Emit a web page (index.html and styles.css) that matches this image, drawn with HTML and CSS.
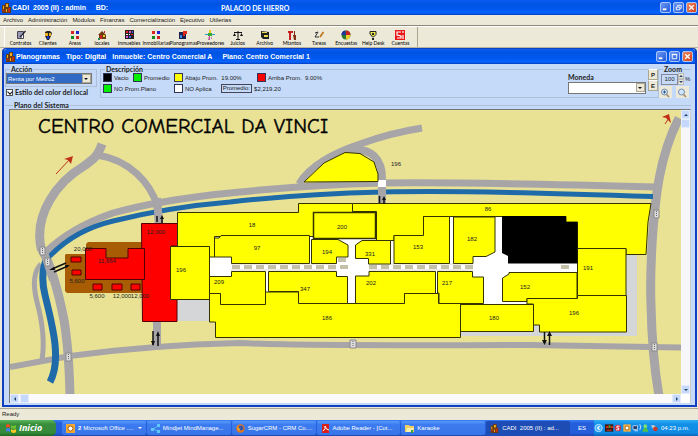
FILE: index.html
```html
<!DOCTYPE html>
<html lang="es">
<head>
<meta charset="utf-8">
<title>CADI 2005 - Planogramas</title>
<link rel="stylesheet" href="styles.css">
</head>
<body>
<svg class="defs" aria-hidden="true">
  <symbol id="app" viewBox="0 0 9 10"><path fill="#6b3a10" d="M0 2h3V0h4v4h2v6H0z"/><path fill="#f0b020" d="M1 3h1v3H1zM4 1h2v3H4zM4 6h1v3H4z"/><path fill="#c03010" d="M6 5h2v4H6zM0 7h3v1H0z"/></symbol>
  <symbol id="min" viewBox="0 0 10 10"><path fill="#fff" d="M2 6h4v2H2z"/></symbol>
  <symbol id="max" viewBox="0 0 10 10"><path fill="none" stroke="#fff" d="M2.500 2.500h5v5h-5zM2 3h6"/></symbol>
  <symbol id="restore" viewBox="0 0 10 10"><path fill="none" stroke="#fff" d="M4 4V2.500h4v3.500H7M2.500 4.500h4v3h-4z"/></symbol>
  <symbol id="close" viewBox="0 0 10 10"><path fill="none" stroke="#fff" stroke-width="1.400" d="M2.500 2.500l5 5M7.500 2.500l-5 5"/></symbol>
  <symbol id="lens" viewBox="0 0 12 11"><path stroke="#a08868" stroke-width="1.600" d="M7 7l3 3"/><circle cx="5.500" cy="5" r="3" fill="#cfe6ff" stroke="#7c8ca8"/></symbol>
</svg>

<header class="titlebar">
  <svg class="app-icon"><use href="#app"/></svg>
  <h1 class="title-left">CADI&nbsp; 2005 (II) : admin &nbsp; &nbsp; BD:</h1>
  <span class="title-mid">PALACIO DE HIERRO</span>
  <div class="winbtns">
    <button aria-label="Minimizar"><svg><use href="#min"/></svg></button>
    <button aria-label="Restaurar"><svg><use href="#restore"/></svg></button>
    <button class="x" aria-label="Cerrar"><svg><use href="#close"/></svg></button>
  </div>
</header>

<nav class="menu">
  <a href="#">Archivo</a><a href="#">Administración</a><a href="#">Módulos</a><a href="#">Finanzas</a><a href="#">Comercialización</a><a href="#">Ejecutivo</a><a href="#">Utilerias</a>
</nav>

<div class="toolbar">
  <div class="tools">
    <button><svg viewBox="0 0 10 10"><path fill="#fff" stroke="#445" d="M1.500 1.500h6v7h-6z"/><path stroke="#336" d="M2 3h5M2 5h3M2 7h4"/><path stroke="#223" stroke-width="1.200" d="M9.500 1L4 7"/></svg>Contratos</button>
    <button><svg viewBox="0 0 10 10"><path fill="#222" d="M2 2l2-1h3l2 2-1 3-2 4H4L2 6z"/><path fill="#e8b020" d="M2 3h3v3H2zM6 3h2v3H6z"/><path fill="#1830c0" d="M4 6h2v3H4z"/></svg>Clientes</button>
    <button><svg viewBox="0 0 10 10"><path fill="#d22" d="M1 1h3v3H1z"/><path fill="#22c" d="M6 1h3v3H6z"/><path fill="#182" d="M1 6h3v3H1z"/><path fill="#c22" d="M6 6h3v3H6z"/></svg>Areas</button>
    <button><svg viewBox="0 0 10 10"><path fill="#6a3c10" d="M1 5l4-4 4 4v4H2V5z"/><path fill="#d42020" d="M3 5h2v4H3zM7 1h1v2H7z"/><path fill="#e8d030" d="M6 5h2v2H6z"/><path fill="#284" d="M1 8h2v2H1z"/></svg>locales</button>
    <button><svg viewBox="0 0 10 10"><path fill="#222" d="M1 0h9v9H1z"/><path fill="#e22" d="M2 1h2v2H2zM7 4h2v1H7z"/><path fill="#d5c" d="M5 1h2v2H5zM2 6h2v2H2z"/><path fill="#45e" d="M8 1h1v2H8zM5 6h2v2H5z"/><path fill="#fff" d="M2 4h2v1H2zM5 4h1v1H5z"/></svg>Inmuebles</button>
    <button><svg viewBox="0 0 10 10"><path fill="#d22" d="M1 1h3v3H1z"/><path fill="#22c" d="M6 1h3v3H6z"/><path fill="#182" d="M1 6h3v3H1z"/><path fill="#c22" d="M6 6h3v3H6z"/></svg>Inmobiliarias</button>
    <button><svg viewBox="0 0 10 10"><path fill="#1a2050" d="M1 2h7v7H1z"/><path fill="#e02818" d="M5 1h4v3H7v2H5z"/><path fill="#3a8ae0" d="M2 5h2v3H2z"/></svg>Planogramas</button>
    <button><svg viewBox="0 0 10 10"><path fill="#e8c818" d="M4 0h2v3H4z"/><path fill="#28a0c8" d="M0 4h10v1H0z"/><path fill="#38a838" d="M3 3h4v3H3z"/><path fill="#c050a0" d="M4 6h1v4H3zM6 6l1 3H6z"/></svg>Proveedores</button>
    <button><svg viewBox="0 0 10 10"><path fill="none" stroke="#111" d="M5 1v8M1 2.500h8M3 9.500h4"/><path fill="#111" d="M0 6l1.500-3L3 6zM7 6l1.500-3L10 6z"/></svg>Juicios</button>
    <button><svg viewBox="0 0 10 10"><path fill="#222" d="M1 1l8 1v7H3L1 7z"/><path fill="#e8dc50" d="M2 2h5v1H2zM4 5h4v2H4z"/></svg>Archivo</button>
    <button><svg viewBox="0 0 10 10"><path fill="#c82020" d="M1 1h5v2H4v7H2V3H1z"/><path fill="#803018" d="M7 1h1v4H7zM6 5h3v5H7z"/></svg>Mtantos</button>
    <button><svg viewBox="0 0 10 10"><path fill="none" stroke="#333" d="M1 3l3-1-3 5h4"/><path stroke="#c07820" stroke-width="1.800" d="M9.500 2L6 7"/></svg>Tareas</button>
    <button><svg viewBox="0 0 10 10"><circle cx="5" cy="5" r="4.500" fill="#2a7830"/><path fill="#c82020" d="M5 5V.5A4.500 4.500 0 0 1 9.500 5z"/><path fill="#e8d030" d="M5 5h4.500A4.500 4.500 0 0 1 5 9.500z"/><path fill="#2030a0" d="M5 5H.5A4.500 4.500 0 0 1 4 .6z"/></svg>Encuestas</button>
    <button><svg viewBox="0 0 10 10"><path fill="#ece850" stroke="#222" d="M2 1.500h6v3L5.500 7h-1L2 4z"/><path fill="#222" d="M4 3h2v2H4zM4 8h2v2H4z"/></svg>Help Desk</button>
    <button><svg viewBox="0 0 10 10"><path fill="#e81818" d="M0 0h10v10H0z"/><path fill="none" stroke="#fff" stroke-width="1.200" d="M6 2H2v3l4 1v2H2M8 1v2M8 5v4"/></svg>Cuentas</button>
  </div>
</div>

<main class="mdi">
  <div class="titlebar inner">
    <svg class="app-icon"><use href="#app"/></svg>
    <h2 class="mdi-title"><span>Planogramas</span><span>Tipo: Digital</span><span>Inmueble: Centro Comercial A</span><span class="plano">Plano: Centro Comercial 1</span></h2>
    <div class="winbtns">
      <button aria-label="Minimizar plano"><svg><use href="#min"/></svg></button>
      <button aria-label="Maximizar plano"><svg><use href="#max"/></svg></button>
      <button class="x" aria-label="Cerrar plano"><svg><use href="#close"/></svg></button>
    </div>
  </div>

  <div class="client">
    <div class="controls">
      <div class="left">
        <fieldset class="group accion">
          <legend><label for="accion">Acción</label></legend>
          <div class="combo"><select id="accion"><option>Renta por Metro2</option></select><i class="drop"></i></div>
        </fieldset>
        <label class="check"><input type="checkbox" checked>Estilo del color del local</label>
      </div>
      <fieldset class="group desc">
        <legend>Descripción</legend>
        <div class="desc-row">
          <div class="keys">
            <span class="key"><i class="sw black"></i>Vacio</span>
            <span class="key"><i class="sw green"></i>Promedio</span>
            <span class="key"><i class="sw yellow"></i>Abajo Prom.&nbsp; 19.00%</span>
            <span class="key"><i class="sw red"></i>Arriba Prom.&nbsp; 9.00%</span>
            <span class="key wide"><i class="sw green"></i>NO Prom.Plano</span>
            <span class="key both"><i class="sw white"></i>NO Aplica<b class="prom">Promedio:</b>$2,219.20</span>
          </div>
          <div class="moneda">
            <label for="moneda">Moneda</label>
            <div class="combo blank"><select id="moneda"><option></option></select><i class="drop"></i></div>
          </div>
          <div class="pe"><button>P</button><button>E</button></div>
        </div>
      </fieldset>
      <fieldset class="group zoom">
        <legend><label for="zoom">Zoom</label></legend>
        <div class="zoomrow"><input id="zoom" value="100"><span class="spin"><button aria-label="Aumentar"><i class="up"></i></button><button aria-label="Reducir"><i class="dn"></i></button></span><span class="pct">%</span></div>
        <div class="lenses"><button aria-label="Acercar"><svg viewBox="0 0 12 11"><use href="#lens"/><path stroke="#357" d="M4 5h3M5.500 3.500v3"/></svg></button><button aria-label="Alejar"><svg viewBox="0 0 12 11"><use href="#lens"/></svg></button></div>
      </fieldset>
    </div>

    <fieldset class="group system">
      <legend>Plano del Sistema</legend>
      <div class="viewer">
        <svg class="map" viewBox="10 110 671 284" role="img" aria-label="Plano Centro Comercial Da Vinci">
          <rect x="10" y="110" width="671" height="284" fill="#e9e295"/>
          <g class="road">
            <path stroke-width="9" d="M102 144C97 158 93 159 84 166C57 182 34 214 41 248C50 262 57 285 64 320Q69 350 70 396"/>
            <path stroke-width="7" d="M97 155C130 160 150 183 157 205"/>
            <path stroke-width="8" d="M157 203L159 224M157 320V346"/>
            <path stroke-width="7" d="M46 252Q70 228 113 213Q160 200 230 193Q305 185 383 183Q470 182 656 187"/>
            <path stroke-width="5" d="M41 264C33 272 33 286 37 302Q46 335 42 360"/>
            <path stroke-width="6" d="M10 367L70 356Q150 345 240 343Q300 346 530 345L681 347.500"/>
            <path stroke-width="7" d="M299 184C309 166 335 152 360 144Q390 133 422 128"/>
            <path stroke-width="8" d="M345 151C372 145 383 160 382 181V205"/>
            <path stroke-width="9" d="M679 118C660 155 655 195 652 245Q650 280 651 305Q652 355 659 396"/>
          </g>
          <g fill="none" stroke="#1f6aa8">
            <path stroke-width="5" d="M50 256Q75 230 113 221Q170 207 230 202Q300 194 383 192Q470 190 653 196.500"/>
            <path stroke-width="7" d="M49 254C41 268 42 283 45 295C52 324 62 360 50 382"/>
          </g>
          <path fill="none" stroke="#a8a5a8" stroke-width="8" d="M157 198L159 224M382 186V205M44 252L53 280"/>
          <path fill="#d5d6d8" d="M177 299h33v22h-33zM460 325h166V254h11v82H460z"/>
          <path fill="#fff" d="M209 236h370v68H209zM449 217h54v20h-54zM378 180h8v7h-8z"/>
          <path stroke="#c4c1a8" stroke-width="4" stroke-dasharray="8 4" d="M232 267H348M369 267H476M561 267H569M338 260H346"/>
          <path stroke="#ded8c8" stroke-width="1" d="M231 264H336M231 270H336M369 264H473M369 270H473"/>
          <path fill="#a85c04" d="M66 254H86V244L88 242H143L145 244V293H67L65 291V255z"/>
          <g class="lot red">
            <path d="M141.500 223.500H178V246H171V299H177V321.500H142.500z"/>
            <path d="M85.500 248.500H106V258H128V248.500H144.500V279.500H85.500z"/>
            <path d="M71 257h10v5H71zM72 270h9v5h-9zM93 284h9v6h-9zM112 284h10v6h-10zM131 284h9v6h-9z"/>
          </g>
          <g class="lot">
            <path d="M304 182L324 163L345 152.500L360 153.500L374 162L378 174V181.500z"/>
            <path d="M177.500 212.500H298.500V203.500H352.500V212.500H313.500V236.500H214.500V257H209.500V246.500H177.500z"/>
            <path d="M352.500 203.500H651L648 222L646 254.500H626V248.500H577.500V222H566V216.500H423.500V235.500H394V240.500H376.500V211.500H352.500z"/>
            <path stroke-width="1.500" d="M313.500 212.500H375.500V238.500H313.500z"/>
            <path d="M170.500 246.500H209.500V299.500H170.500z"/>
            <path d="M214.500 238H219L221 235.500H309.500V263.500H231.500V257H214.500z"/>
            <path d="M311.500 239.500H338L348 245V257H336.500V263.500H311.500z"/>
            <path d="M355.500 245L362 240.500H390.500V264H368.500V258.500H355.500z"/>
            <path d="M394 235.500H423.500V216.500H449.500V263.500H394z"/>
            <path d="M453.500 217H495V252L486 256.500H473V263.500H453.500z"/>
            <path d="M577.500 248.500H626V295.500H577.500z"/>
            <path d="M502.500 278L509 274V272.500H577V298.500H527V301.500H502.500z"/>
            <path d="M527 298.500H577.500V295.500H626.500V332H539.500V325H533.500V304H527z"/>
            <path d="M460.500 304.500H533.500V331.500H460.500z"/>
            <path d="M209.500 276.500H231.500V271.500H265.500V304.500H220.500V293.500H209.500z"/>
            <path d="M268.500 271.500H336.500V276.500H347.500V303.500H298.500V291.500H268.500z"/>
            <path d="M355.500 276H369V271.500H435.500V293.500H404.500V303.500H355.500z"/>
            <path d="M437.500 271.500H472.500V277H483.500V303.500H439V293H437.500z"/>
            <path d="M209.500 293.500H220.500V304.500H265.500V292H298.500V303.500H404.500V293.500H438.500V303.500H460.500V337.500H215.500V322H209.500z"/>
          </g>
          <path d="M502 216H566V222H577.500V263.500H508V256L502 253z"/>
          <g fill="#ddd" stroke="#888" stroke-width="1">
            <path d="M40 247h5v8h-5zM45 258h5v8h-5zM66 353h5v8h-5zM654 210h5v8h-5zM350 340h6v8h-6zM652 343h5v8h-5z"/>
            <path stroke="#666" stroke-dasharray="1 1" d="M42.500 248v6M47.500 259v6M68.500 354v6M656.500 211v6M353 341v6M654.500 344v6"/>
          </g>
          <g stroke="#111" stroke-width="1.500" fill="#111">
            <path d="M153 331V345M158 346V334M544.500 332V343M549.500 345V334M379.500 196V203M384 204V198M157 216V222M162 223V218M66 263L52 269M68 266L54 272"/>
            <path stroke="none" d="M151 341h4l-2 5zM156 336h4l-2-5zM542 340h5l-2.500 5zM547 336h5l-2.500-5zM382 200h4l-2-4zM160 219h4l-2-4zM49 270l5-3 1 3zM70 265l-5 0 1 3z"/>
          </g>
          <g stroke="#c03018" fill="#c03018"><path d="M56 174L70 159M665 124L669 118"/><path stroke="none" d="M73 156l-9 3 4 1 3 4zM669 114l-7 3 4 1 5 5z"/></g>
          <text class="name" x="38" y="133">CENTRO COMERCIAL DA VINCI</text>
          <g class="num">
            <text x="396" y="166">196</text><text x="252" y="227">18</text><text x="342" y="229">200</text><text x="488" y="211">86</text>
            <text x="257" y="250">97</text><text x="327" y="254">194</text><text x="370" y="256">331</text><text x="418" y="249">153</text><text x="472" y="241">182</text>
            <text x="181" y="272">196</text><text x="219" y="284">209</text><text x="305" y="291">347</text><text x="371" y="285">202</text><text x="447" y="285">217</text>
            <text x="525" y="289">152</text><text x="588" y="270">191</text><text x="574" y="315">196</text><text x="494" y="320">180</text><text x="327" y="320">186</text>
            <text x="156" y="234">12,000</text><text x="83" y="251">20,000</text><text x="107" y="263">11,664</text><text x="77" y="283">5,600</text>
            <text x="97" y="298">5,600</text><text x="122" y="298">12,000</text><text x="140" y="298">12,000</text>
          </g>
        </svg>
        <div class="vbar"><button aria-label="Arriba"><i class="up"></i></button><span class="thumb"></span><button class="end" aria-label="Abajo"><i class="dn"></i></button></div>
        <div class="hbar"><button aria-label="Izquierda"><i class="lf"></i></button><span class="thumb"></span><button class="end" aria-label="Derecha"><i class="rt"></i></button></div>
      </div>
    </fieldset>
  </div>
</main>

<div class="status">Ready</div>

<footer class="taskbar">
  <button class="start"><svg viewBox="0 0 12 11"><path fill="#e85020" d="M1 2q2-2 4 0v3q-2-2-4 0z"/><path fill="#70c030" d="M6 2q2 2 5 0v3q-2 2-5 0z"/><path fill="#4080f0" d="M1 6q2-2 4 0v3q-2-2-4 0z"/><path fill="#f8c820" d="M6 6q2 2 5 0v3q-2 2-5 0z"/></svg>Inicio</button>
  <div class="tasks">
    <button><svg viewBox="0 0 9 9"><path fill="#f0a830" d="M0 0h9v9H0z"/><circle cx="4.500" cy="4.500" r="2.500" fill="#fff" stroke="#a86010"/></svg><b>2</b> Microsoft Office ....<i class="dn"></i></button>
    <button><svg viewBox="0 0 9 9"><path fill="none" stroke="#50b8f0" d="M2 5l5-3M2 5l5 2"/><path fill="#60c8f8" d="M0 4h3v3H0zM6 0h3v3H6zM6 6h3v3H6z"/></svg>Mindjet MindManage...</button>
    <button><svg viewBox="0 0 9 9"><circle cx="4.500" cy="4.500" r="4.200" fill="#e87818"/><circle cx="5" cy="4" r="2.500" fill="#3858b0"/><path fill="#f8c030" d="M1 3l3 2-1 2z"/></svg>SugarCRM - CRM Co....</button>
    <button><svg viewBox="0 0 9 9"><path fill="#d82018" d="M1 0h7v9H1z"/><path fill="none" stroke="#fff" d="M2 7q3-2 2-5q1 4 4 4"/></svg>Adobe Reader - [Cot...</button>
    <button><svg viewBox="0 0 9 9"><path fill="#f0d060" d="M0 1h4l1 1h4v6H0z"/><path fill="#f8f0b0" d="M2 4h7L7 8H1z"/><path fill="#38a050" d="M6 6h2v3H6z"/></svg>Karaoke</button>
    <button class="active"><svg viewBox="0 0 9 10"><use href="#app"/></svg>CADI&nbsp; 2005 (II) : ad...</button>
  </div>
  <span class="lang">ES</span>
  <div class="tray">
    <svg class="icons" viewBox="0 0 72 10">
      <circle cx="5" cy="5" r="4" fill="#48b0f8" stroke="#b8e0ff"/><path fill="none" stroke="#fff" stroke-width="1.200" d="M6 3L4 5l2 2"/>
      <path fill="#401810" d="M12 1h9v8h-9z"/><path fill="#e03018" d="M13 3h3v2h-3zM18 3h3v2h-3zM14 7h5v1h-5z"/><path fill="#40a030" d="M16 2h2v3h-2z"/>
      <circle cx="26" cy="5" r="3.500" fill="#d82838"/><path fill="none" stroke="#fff" d="M28 3h-3v2h2v2h-3"/>
      <path fill="#f0b040" d="M32 1h8v8h-8z"/><circle cx="36" cy="5" r="2.200" fill="#fff" stroke="#a86010"/>
      <path fill="#203868" stroke="#b8d0f0" d="M42.500 2.500h5v4h-5z"/><path fill="none" stroke="#d8e8ff" d="M50 1q2 3 0 6M44 8h4"/>
      <circle cx="56" cy="3" r="2" fill="#80e070"/><path fill="#50c048" d="M53 9q0-4 3-4t3 4z"/>
      <path fill="#c8c8c8" d="M62 2h4l3 5h-4z"/><circle cx="67" cy="6" r="2.500" fill="#c83828"/>
    </svg>
    <time>04:23 p.m.</time>
  </div>
</footer>
</body>
</html>
```
FILE: styles.css
```css
* { box-sizing: border-box; }
body {
  margin: 0;
  min-height: 100vh;
  display: flex;
  flex-direction: column;
  background: #ece9d8;
  color: #222;
  font: 6px/8px "Liberation Sans", Arial, sans-serif;
}
button, select, input { font: inherit; color: inherit; margin: 0; padding: 0; border: 0; border-radius: 0; }
svg { display: block; }
h1, h2 { margin: 0; font: inherit; white-space: nowrap; }
.defs { position: absolute; width: 0; height: 0; }

.titlebar {
  display: flex;
  align-items: center;
  height: 15px;
  padding: 0 1px 0 2px;
  background: linear-gradient(#0a5cf0, #0054e3 25%, #0058ee 60%, #0664ff 85%, #0040c0);
  color: #fff;
  font: bold 7px/10px "Liberation Sans", Arial, sans-serif;
}
.app-icon { width: 9px; height: 10px; flex: none; margin-right: 1px; }
.title-left { width: 209px; }
.title-mid { font-family: Lato, sans-serif; }
.winbtns { display: flex; gap: 2px; margin-left: auto; }
.winbtns button {
  width: 11px; height: 11px;
  border: 1px solid #a8c4f8; border-radius: 2px;
  background: linear-gradient(135deg, #6c98f4, #2058d8);
}
.winbtns .x { background: linear-gradient(135deg, #f08860, #d04018); }
.winbtns svg { width: 9px; height: 9px; }

.menu { display: flex; gap: 5px; height: 11px; padding: 1px 3px; border-bottom: 1px solid #8c8a7c; }
.menu a { color: #222; text-decoration: none; }
.toolbar { height: 22px; border-top: 1px solid #fff; border-bottom: 1px solid #b8b4a0; padding-left: 4px; }
.tools { display: grid; grid-template-columns: repeat(15, 1fr); width: 414px; height: 20px; padding: 0 3px 0 2px; border-left: 1px solid #fff; border-right: 1px solid #aaa793; }
.tools button {
  display: flex; flex-direction: column; align-items: center; justify-content: flex-end;
  min-width: 0; background: none; color: #000; font: 5px/7px Lato, sans-serif; white-space: nowrap;
}
.tools svg { width: 10px; height: 10px; }

.mdi { flex: 1; border: solid #1040c0; border-width: 1px 2px 2px; margin: 0 1px 0 2px; border-radius: 4px 4px 0 0; display: flex; flex-direction: column; }
.inner { border-radius: 3px 3px 0 0; padding-right: 2px; }
.mdi-title { display: flex; gap: 6px; }
.plano { margin-left: 4px; }

.client { flex: 1; background: #c4daf8; padding: 1px 4px 2px 1px; }
.controls { display: flex; height: 37px; gap: 3px; }
.group { margin: 0; padding: 0; min-width: 0; border: 1px solid #aebfd8; }
.group legend { margin-left: 4px; padding: 0 1px; font: bold 7px/8px Lato, sans-serif; }
.left { width: 92px; }
.accion { height: 22px; }
.combo { position: relative; height: 11px; margin-right: 4px; border: 1px solid #777; background: #fff; }
.combo select { display: block; width: 100%; height: 9px; appearance: none; background: #316ac5; color: #fff; padding-left: 1px; }
.drop { position: absolute; right: 0; top: 0; width: 9px; height: 9px; background: #ece9d8; border: 1px solid #aaa793; pointer-events: none; }
.drop::after { content: ""; position: absolute; left: 1px; top: 3px; border: 2px solid transparent; border-top-color: #111; }
.check { display: flex; align-items: center; gap: 2px; margin-top: 1px; font: bold 7px/8px Lato, sans-serif; white-space: nowrap; }
.check input { width: 7px; height: 7px; appearance: none; background: #fff; border: 1px solid #555; margin-left: 1px; position: relative; }
.check input:checked::after { content: ""; position: absolute; left: 1px; top: 0; width: 3px; height: 3px; border: solid #111; border-width: 0 0 1px 1px; transform: rotate(-45deg); }
.desc { flex: 1; height: 33px; }
.desc-row { display: flex; align-items: flex-start; }
.keys { display: grid; grid-template-columns: 30px 41px 83px auto; row-gap: 2px; padding-left: 2px; }
.key { display: flex; align-items: center; gap: 2px; height: 9px; white-space: nowrap; }
.wide { grid-column: span 2; }
.both { grid-column: span 2; }
.sw { width: 9px; height: 9px; border: 1px solid #335; flex: none; }
.black { background: #000; }
.green { background: #0e0; }
.yellow { background: #ff0; }
.red { background: #f00; }
.white { background: #fff; }
.prom { font-weight: normal; border: 1px solid #445; padding: 0 1px; margin-left: 7px; line-height: 7px; }
.moneda { margin-left: auto; width: 78px; font: bold 7px/9px Lato, sans-serif; }
.moneda label { display: block; }
.blank { height: 12px; margin: 0; }
.blank select { background: #fff; height: 10px; }
.pe { display: flex; flex-direction: column; margin: -4px 0 0 2px; }
.pe button { width: 10px; height: 11px; background: #ece9d8; border: 1px solid #aaa793; border-top-color: #fff; font-weight: bold; line-height: 8px; }
.zoom { width: 32px; height: 34px; border-width: 1px 0 0; margin-left: -3px; }
.zoomrow { display: flex; align-items: center; margin-left: 2px; }
.zoomrow input { width: 17px; height: 11px; background: #c4daf8; border: 1px solid #889; text-align: center; }
.spin { display: flex; flex-direction: column; }
.spin button { width: 6px; height: 6px; background: #ece9d8; border: 1px solid #bbb; display: grid; place-items: center; }
.pct { margin-left: 1px; }
.lenses { display: flex; gap: 4px; margin-top: 1px; }
.lenses button { width: 13px; height: 12px; background: #ece9d8; }
.lenses svg { width: 12px; height: 11px; }

.up, .dn, .lf, .rt { width: 0; height: 0; border: 2px solid transparent; }
.up { border-top: 0; border-bottom-color: #246; }
.dn { border-bottom: 0; border-top-color: #246; }
.lf { border-left: 0; border-right-color: #246; }
.rt { border-right: 0; border-left-color: #246; }

.system { border-right: 0; border-bottom: 0; border-left: 0; padding-left: 4px; }
.system legend { margin-left: 4px; line-height: 7px; }
.viewer { display: grid; grid-template-columns: 1fr 9px; grid-template-rows: auto 9px; border: 1px solid #777; border-right-color: #ccc; border-bottom: 0; background: #fff; }
.map { width: 100%; height: auto; }
.vbar { display: flex; flex-direction: column; background: #f6f6fb; }
.hbar { display: flex; background: #fbfbfd; gap: 1px; }
.vbar button, .hbar button, .thumb { width: 9px; height: 9px; background: #c6d8fc; border: 1px solid #e4ecff; border-radius: 1px; display: grid; place-items: center; }
.end { margin-top: auto; }
.hbar .end { margin: 0 0 0 auto; }
.road { fill: none; stroke: #a8a5a8; }
.lot path { fill: #ff0; stroke: #333300; }
.lot.red path { fill: #f00; stroke: #500; }
.name { font: 21px "Comic Sans MS", "Comic Neue", Lato, sans-serif; fill: #000; stroke: #000; stroke-width: 0.4; }
.num { font: 6px "Liberation Sans", sans-serif; fill: #222; text-anchor: middle; }

.status { height: 12px; padding: 1px 2px; margin-top: 1px; border-top: 1px solid #aaa793; line-height: 9px; }
.taskbar { display: flex; height: 16px; background: linear-gradient(#3a80f4, #245edb 20%, #245edb 80%, #1c48b0); color: #fff; white-space: nowrap; }
.start { display: flex; align-items: center; gap: 2px; width: 56px; padding-left: 5px; border-radius: 0 5px 5px 0; background: linear-gradient(#5cb85c, #388e3c 25%, #348a38 80%, #206820); color: #fff; font: italic bold 9px/12px "Open Sans", sans-serif; }
.start svg { width: 12px; height: 11px; }
.tasks { flex: 1; display: grid; grid-template-columns: repeat(6, minmax(0, 1fr)); gap: 1px; padding: 1px 0 1px 6px; }
.tasks button { display: flex; align-items: center; gap: 2px; min-width: 0; padding: 0 4px; border-radius: 2px; background: linear-gradient(#5a9af8, #3c7cf0 25%, #3874e8); color: #fff; }
.tasks svg { width: 9px; height: 9px; flex: none; margin-right: 1px; }
.tasks .dn { border-top-color: #fff; margin-left: auto; }
.tasks .active { background: #1c4cb4; }
.lang { width: 24px; line-height: 16px; text-align: center; }
.tray { display: flex; align-items: center; width: 104px; background: linear-gradient(#30b0f8, #1290e8 25%, #0f8ae4 80%, #0c68b8); }
.icons { width: 66px; height: 10px; }
.tray time { margin-left: 1px; }
```
